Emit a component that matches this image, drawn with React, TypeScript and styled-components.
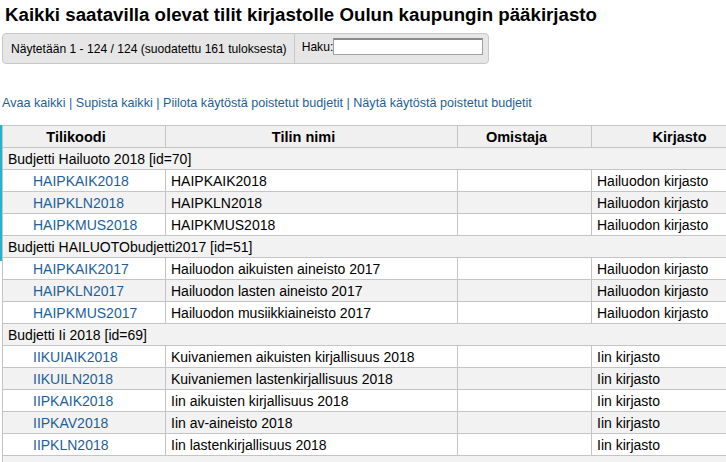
import React from "react";
import styled, { createGlobalStyle } from "styled-components";

const Global = createGlobalStyle`
  html, body { margin: 0; padding: 0; background: #fff; overflow: hidden; }
  body { font-family: "Liberation Sans", Arial, sans-serif; color: #000; }
`;

const Page = styled.div`
  padding: 0 0 0 2px;
  width: 800px;
`;

const Title = styled.h1`
  margin: 0;
  padding: 4px 0 0 3px;
  font-size: 18.7px;
  font-weight: bold;
  line-height: 21px;
`;

const InfoBar = styled.div`
  margin-top: 8px;
  width: 487px;
  height: 31px;
  box-sizing: border-box;
  display: flex;
  align-items: center;
  background: #e6e6e6;
  border: 1px solid #c8c8c8;
  border-radius: 4px;
  font-size: 12.1px;
`;

const InfoText = styled.div`
  padding: 0 7px 0 8px;
  height: 100%;
  display: flex;
  align-items: center;
  border-right: 1px solid #c8c8c8;
`;

const SearchLabel = styled.label`
  display: flex;
  align-items: center;
  padding-left: 7px;
  height: 100%;
  margin-top: -4px;
`;

const SearchInput = styled.input`
  width: 150px;
  height: 17px;
  box-sizing: border-box;
  margin: 0;
  border: 1px solid #a0a0a0;
  border-top: 2px solid #8a8a8a;
  background: #fff;
  padding: 0;
`;

const LinkRow = styled.div`
  margin-top: 32px;
  font-size: 12.6px;
  line-height: 15px;
  color: #1d5f9b;
`;

const Link = styled.a`
  color: #1d5f9b;
  text-decoration: none;
`;

const TableWrap = styled.div`
  position: relative;
  margin-top: 14px;
  &::before {
    content: "";
    position: absolute;
    left: -2px;
    top: 0;
    width: 2px;
    height: 136px;
    background: #20b4cf;
  }
`;

const Table = styled.table`
  border-collapse: collapse;
  width: 781px;
  font-size: 14px;
  table-layout: fixed;
`;

const Th = styled.th`
  background: #f0f0f0;
  border: 1px solid #c4c4c4;
  height: 22px;
  padding: 0 18px 0 2px;
  font-weight: bold;
  font-size: 14.5px;
  text-align: center;
  box-sizing: border-box;
`;

const GroupCell = styled.td`
  background: #f2f2f2;
  border: 1px solid #c4c4c4;
  height: 22px;
  padding: 0 0 0 5px;
  box-sizing: border-box;
`;

const Row = styled.tr<{ $alt: boolean }>`
  background: ${(p) => (p.$alt ? "#f2f2f2" : "#fff")};
`;

const Td = styled.td<{ $indent?: boolean }>`
  border: 1px solid #c4c4c4;
  height: 22px;
  padding: 0 0 0 ${(p) => (p.$indent ? "30px" : "5px")};
  box-sizing: border-box;
  white-space: nowrap;
  overflow: hidden;
`;

const CodeLink = styled.a`
  color: #1d5f9b;
  text-decoration: none;
`;

type Item = { code: string; name: string; lib: string };
type Group = { title: string; items: Item[] };

const groups: Group[] = [
  {
    title: "Budjetti Hailuoto 2018 [id=70]",
    items: [
      { code: "HAIPKAIK2018", name: "HAIPKAIK2018", lib: "Hailuodon kirjasto" },
      { code: "HAIPKLN2018", name: "HAIPKLN2018", lib: "Hailuodon kirjasto" },
      { code: "HAIPKMUS2018", name: "HAIPKMUS2018", lib: "Hailuodon kirjasto" },
    ],
  },
  {
    title: "Budjetti HAILUOTObudjetti2017 [id=51]",
    items: [
      { code: "HAIPKAIK2017", name: "Hailuodon aikuisten aineisto 2017", lib: "Hailuodon kirjasto" },
      { code: "HAIPKLN2017", name: "Hailuodon lasten aineisto 2017", lib: "Hailuodon kirjasto" },
      { code: "HAIPKMUS2017", name: "Hailuodon musiikkiaineisto 2017", lib: "Hailuodon kirjasto" },
    ],
  },
  {
    title: "Budjetti Ii 2018 [id=69]",
    items: [
      { code: "IIKUIAIK2018", name: "Kuivaniemen aikuisten kirjallisuus 2018", lib: "Iin kirjasto" },
      { code: "IIKUILN2018", name: "Kuivaniemen lastenkirjallisuus 2018", lib: "Iin kirjasto" },
      { code: "IIPKAIK2018", name: "Iin aikuisten kirjallisuus 2018", lib: "Iin kirjasto" },
      { code: "IIPKAV2018", name: "Iin av-aineisto 2018", lib: "Iin kirjasto" },
      { code: "IIPKLN2018", name: "Iin lastenkirjallisuus 2018", lib: "Iin kirjasto" },
    ],
  },
  { title: "", items: [] },
];

export default function App() {
  return (
    <Page>
      <Global />
      <Title>Kaikki saatavilla olevat tilit kirjastolle Oulun kaupungin pääkirjasto</Title>
      <InfoBar>
        <InfoText>Näytetään 1 - 124 / 124 (suodatettu 161 tuloksesta)</InfoText>
        <SearchLabel>
          Haku:<SearchInput type="text" />
        </SearchLabel>
      </InfoBar>
      <LinkRow>
        <Link href="#">Avaa kaikki</Link> | <Link href="#">Supista kaikki</Link> |{" "}
        <Link href="#">Piilota käytöstä poistetut budjetit</Link> |{" "}
        <Link href="#">Näytä käytöstä poistetut budjetit</Link>
      </LinkRow>
      <TableWrap>
        <Table>
          <colgroup>
            <col style={{ width: 163 }} />
            <col style={{ width: 292 }} />
            <col style={{ width: 134 }} />
            <col style={{ width: 192 }} />
          </colgroup>
          <thead>
            <tr>
              <Th>Tilikoodi</Th>
              <Th>Tilin nimi</Th>
              <Th>Omistaja</Th>
              <Th>Kirjasto</Th>
            </tr>
          </thead>
          <tbody>
            {groups.map((g, gi) => (
              <React.Fragment key={gi}>
                <tr>
                  <GroupCell colSpan={4}>{g.title}</GroupCell>
                </tr>
                {g.items.map((it, i) => (
                  <Row key={it.code} $alt={i % 2 === 1}>
                    <Td $indent>
                      <CodeLink href="#">{it.code}</CodeLink>
                    </Td>
                    <Td>{it.name}</Td>
                    <Td></Td>
                    <Td>{it.lib}</Td>
                  </Row>
                ))}
              </React.Fragment>
            ))}
          </tbody>
        </Table>
      </TableWrap>
    </Page>
  );
}
